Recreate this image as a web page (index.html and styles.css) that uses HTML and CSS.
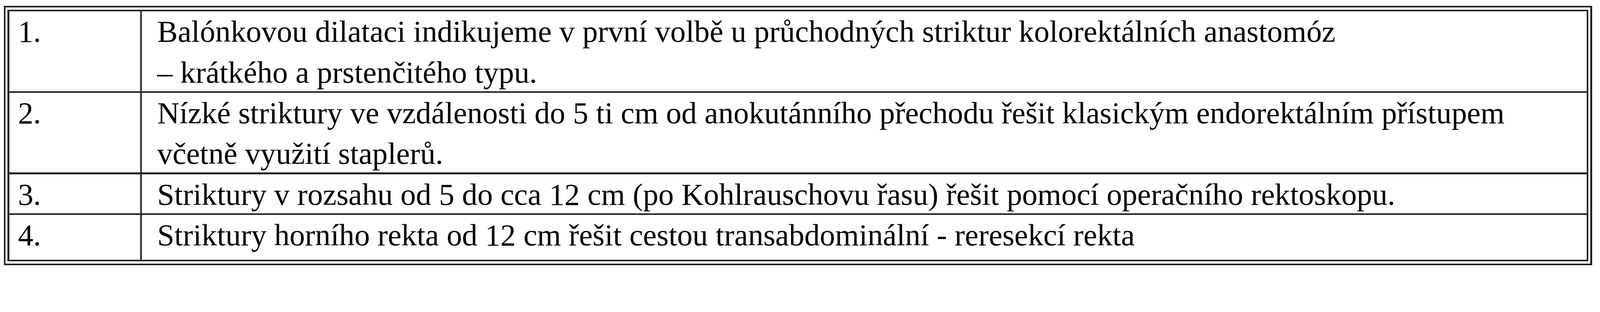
FILE: index.html
```html
<!DOCTYPE html>
<html lang="cs">
<head>
<meta charset="utf-8">
<title>Striktury</title>
<link rel="stylesheet" href="styles.css">
</head>
<body>
<div class="frame">
  <div class="ring">
    <div class="grid">
      <div class="cell num"><p>1.</p></div>
      <div class="cell txt"><p>Balónkovou dilataci indikujeme v první volbě u průchodných striktur kolorektálních anastomóz<br>– krátkého a prstenčitého typu.</p></div>
      <div class="cell num"><p>2.</p></div>
      <div class="cell txt"><p>Nízké striktury ve vzdálenosti do 5 ti cm od anokutánního přechodu řešit klasickým endorektálním přístupem<br>včetně využití staplerů.</p></div>
      <div class="cell num"><p>3.</p></div>
      <div class="cell txt"><p>Striktury v rozsahu od 5 do cca 12 cm (po Kohlrauschovu řasu) řešit pomocí operačního rektoskopu.</p></div>
      <div class="cell num last"><p>4.</p></div>
      <div class="cell txt last"><p>Striktury horního rekta od 12 cm řešit cestou transabdominální - reresekcí rekta</p></div>
    </div>
  </div>
</div>
</body>
</html>
```

FILE: styles.css
```css
:root {
  --u: calc(100vw / 4631);
}

html, body {
  margin: 0;
  padding: 0;
  background: #ffffff;
  overflow: hidden;
}

body {
  font-family: "Liberation Serif", "Times New Roman", serif;
  color: #000000;
}

.frame {
  box-sizing: border-box;
  width: calc(4597 * var(--u));
  margin: calc(17 * var(--u)) 0 0 calc(11 * var(--u));
  padding: calc(5 * var(--u));
  background: #222222;
}

.ring {
  padding: calc(6 * var(--u));
  background: #ffffff;
}

.grid {
  display: grid;
  grid-template-columns: calc(379 * var(--u)) 1fr;
  gap: calc(5 * var(--u));
  padding: calc(5 * var(--u));
  background: #222222;
}

.cell {
  background: #ffffff;
  display: flow-root;
}

.cell p {
  margin: 0 0 calc(-5 * var(--u)) 0;
  font-size: calc(89 * var(--u));
  line-height: calc(118 * var(--u));
  white-space: nowrap;
}

.num {
  padding-left: calc(25 * var(--u));
}

.txt {
  padding-left: calc(44 * var(--u));
}

.last {
  padding-bottom: calc(17 * var(--u));
}
```
